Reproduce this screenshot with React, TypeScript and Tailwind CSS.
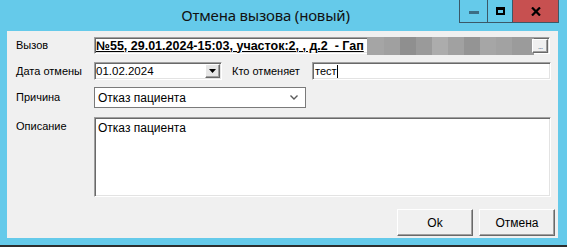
import React from 'react';

const sunken =
  'border border-t-[#a0a0a0] border-l-[#a0a0a0] border-b-white border-r-white shadow-[inset_1px_1px_0_#696969,inset_-1px_-1px_0_#e3e3e3]';
const raised =
  'border border-t-white border-l-white border-b-[#696969] border-r-[#696969] shadow-[inset_-1px_-1px_0_#a0a0a0]';

const blurBlocks = [
  { w: 17, c: '#a5a5a5' },
  { w: 16, c: '#a0a0a0' },
  { w: 16, c: '#8f8f8f' },
  { w: 16, c: '#9a9a9a' },
  { w: 16, c: '#acacac' },
  { w: 16, c: '#a1a1a1' },
  { w: 16, c: '#949494' },
  { w: 16, c: '#a6a6a6' },
  { w: 16, c: '#a2a2a2' },
  { w: 22, c: '#9b9b9b' },
];

function Label({ children, className = '' }: { children: React.ReactNode; className?: string }) {
  return <div className={`w-[78px] shrink-0 text-[11px] text-black ${className}`}>{children}</div>;
}

export default function App() {
  return (
    <div
      className="w-[567px] h-[247px] bg-[#65caea] flex flex-col border-b-2 border-[#2e2e2e] overflow-hidden"
      style={{ fontFamily: '"Liberation Sans", Arial, sans-serif' }}
    >
      {/* title bar */}
      <div className="h-[31px] shrink-0 flex">
        <div className="flex-1 flex justify-center pt-[5px] pl-[72px]">
          <span
            className="text-[15px] text-[#111] leading-[20px] tracking-[-0.2px]"
            style={{ fontFamily: '"Noto Sans", "Open Sans", sans-serif' }}
          >
            Отмена вызова (новый)
          </span>
        </div>
        <div className="flex h-[23px] border border-t-0 border-[#3b5867] mr-[8px]">
          <div className="w-[28px] flex items-center justify-center border-r border-[#3b5867]">
            <div className="w-[10px] h-[3px] bg-[#3c6d84] mt-[3px]" />
          </div>
          <div className="w-[25px] flex items-center justify-center border-r border-[#3b5867]">
            <div className="w-[9px] h-[8px] border-2 border-black border-t-[3px]" />
          </div>
          <div className="w-[45px] bg-[#c75050] flex items-center justify-center">
            <svg width="10" height="9" viewBox="0 0 10 9">
              <path d="M1 0.5 L9 8.5 M9 0.5 L1 8.5" stroke="#000" strokeWidth="2.2" />
            </svg>
          </div>
        </div>
      </div>

      {/* client area */}
      <div className="ml-[7px] w-[551px] h-[207px] bg-[#f0f0f0] flex flex-col pl-[9px] pt-[6px]">
        {/* Вызов */}
        <div className="flex items-center h-[17px]">
          <Label>Вызов</Label>
          <div className={`relative w-[456px] h-[17px] bg-white ${sunken} flex items-center`}>
            <span className="pl-[1px] text-[12.5px] font-bold underline text-black whitespace-pre leading-[14px]">
              №55, 29.01.2024-15:03, участок:2, , д.2  - Гап
            </span>
            <div className="absolute left-[272px] top-[-1px] h-[18px] flex">
              {blurBlocks.map((b, i) => (
                <div key={i} className="h-full" style={{ width: b.w, background: b.c }} />
              ))}
            </div>
            <div className={`absolute right-[1px] top-[1px] w-[16px] h-[14px] bg-[#f0f0f0] ${raised} flex items-center justify-center`}>
              <span className="text-[9px] leading-[6px] text-[#7a8aa8] tracking-[-1px]">...</span>
            </div>
          </div>
        </div>

        {/* Дата отмены / Кто отменяет */}
        <div className="flex items-center h-[18px] mt-[8px]">
          <Label>Дата отмены</Label>
          <div className={`w-[128px] h-[18px] bg-white ${sunken} flex items-center`}>
            <span className="flex-1 pl-[1px] text-[11.5px] text-black leading-[14px]">01.02.2024</span>
            <div className={`w-[15px] h-[14px] mr-[1px] bg-[#e6e6e6] ${raised} flex items-center justify-center`}>
              <svg width="7" height="4" viewBox="0 0 7 4">
                <path d="M0 0 H7 L3.5 4 Z" fill="#000" />
              </svg>
            </div>
          </div>
          <div className="ml-[10px] w-[80px] text-[11px] text-black">Кто отменяет</div>
          <div className={`w-[239px] h-[18px] bg-white ${sunken} flex items-center`}>
            <span className="pl-[2px] text-[11px] text-black leading-[14px]">тест</span>
            <div className="w-px h-[13px] bg-black" />
          </div>
        </div>

        {/* Причина */}
        <div className="flex items-center h-[21px] mt-[7px]">
          <Label>Причина</Label>
          <div className="w-[212px] h-[21px] bg-white border border-[#7a7a7a] flex items-center">
            <span className="flex-1 pl-[3px] text-[12px] text-black">Отказ пациента</span>
            <svg width="8" height="5" viewBox="0 0 8 5" className="mr-[7px]">
              <path d="M0.5 0.5 L4 4 L7.5 0.5" stroke="#5a5a5a" strokeWidth="1.4" fill="none" />
            </svg>
          </div>
        </div>

        {/* Описание */}
        <div className="flex h-[80px] mt-[9px]">
          <Label className="leading-[14px] pt-[2px]">Описание</Label>
          <div className={`w-[457px] h-[80px] bg-white ${sunken} pl-[3px] pt-[3px]`}>
            <div className="text-[12px] leading-[14px] text-black">Отказ пациента</div>
          </div>
        </div>

        {/* buttons */}
        <div className="flex justify-end gap-[6px] mt-[12px] pr-[3px]">
          <button className={`w-[76px] h-[27px] bg-[#f0f0f0] ${raised} text-[12px] text-black`}>Ok</button>
          <button className={`w-[76px] h-[27px] bg-[#f0f0f0] ${raised} text-[12px] text-black`}>Отмена</button>
        </div>
      </div>
    </div>
  );
}
